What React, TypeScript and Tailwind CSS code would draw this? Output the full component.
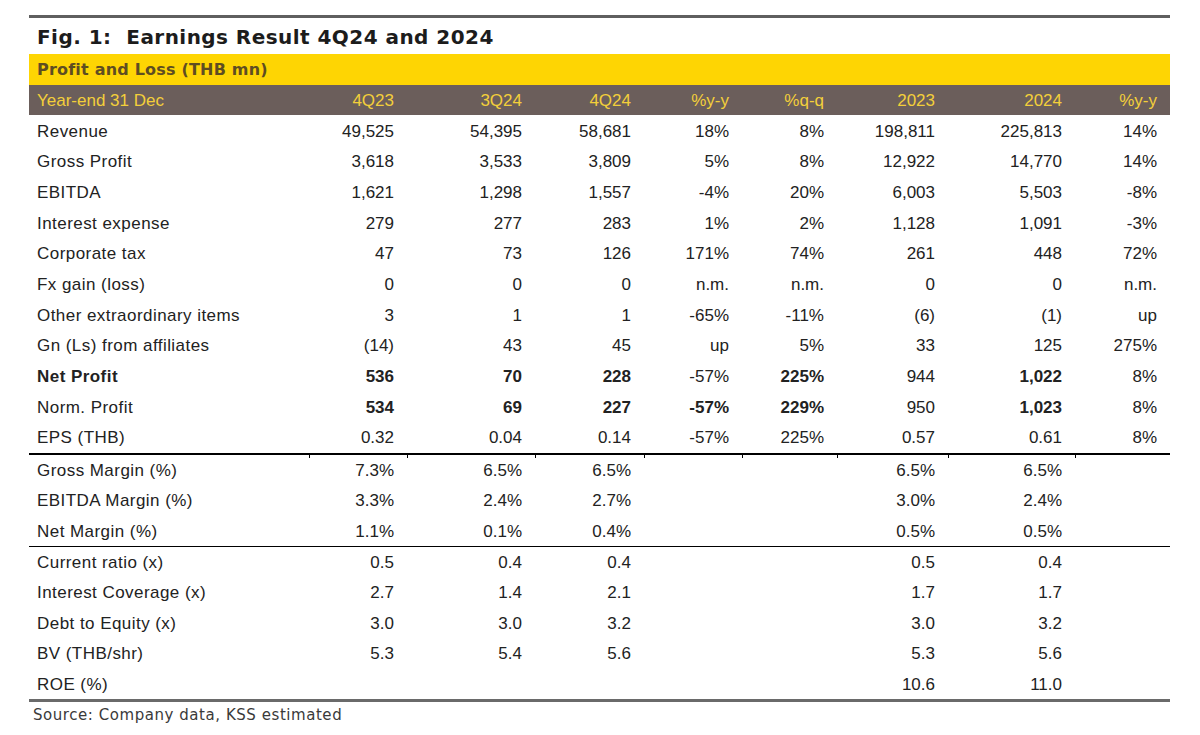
import React from "react";

type Cell = string | { v: string; b?: boolean };
type Row = { label: string; bold?: boolean; cells: Cell[] };

const cols = ["w-[280px]", "w-[98px]", "w-[128px]", "w-[109px]", "w-[98px]", "w-[95px]", "w-[111px]", "w-[127px]", "w-[95px]"];

const B = (v: string) => ({ v, b: true });

const block1: Row[] = [
  { label: "Revenue", cells: ["49,525", "54,395", "58,681", "18%", "8%", "198,811", "225,813", "14%"] },
  { label: "Gross Profit", cells: ["3,618", "3,533", "3,809", "5%", "8%", "12,922", "14,770", "14%"] },
  { label: "EBITDA", cells: ["1,621", "1,298", "1,557", "-4%", "20%", "6,003", "5,503", "-8%"] },
  { label: "Interest expense", cells: ["279", "277", "283", "1%", "2%", "1,128", "1,091", "-3%"] },
  { label: "Corporate tax", cells: ["47", "73", "126", "171%", "74%", "261", "448", "72%"] },
  { label: "Fx gain (loss)", cells: ["0", "0", "0", "n.m.", "n.m.", "0", "0", "n.m."] },
  { label: "Other extraordinary items", cells: ["3", "1", "1", "-65%", "-11%", "(6)", "(1)", "up"] },
  { label: "Gn (Ls) from affiliates", cells: ["(14)", "43", "45", "up", "5%", "33", "125", "275%"] },
  { label: "Net Profit", bold: true, cells: [B("536"), B("70"), B("228"), "-57%", B("225%"), "944", B("1,022"), "8%"] },
  { label: "Norm. Profit", cells: [B("534"), B("69"), B("227"), B("-57%"), B("229%"), "950", B("1,023"), "8%"] },
  { label: "EPS (THB)", cells: ["0.32", "0.04", "0.14", "-57%", "225%", "0.57", "0.61", "8%"] },
];

const block2: Row[] = [
  { label: "Gross Margin (%)", cells: ["7.3%", "6.5%", "6.5%", "", "", "6.5%", "6.5%", ""] },
  { label: "EBITDA Margin (%)", cells: ["3.3%", "2.4%", "2.7%", "", "", "3.0%", "2.4%", ""] },
  { label: "Net Margin (%)", cells: ["1.1%", "0.1%", "0.4%", "", "", "0.5%", "0.5%", ""] },
];

const block3: Row[] = [
  { label: "Current ratio (x)", cells: ["0.5", "0.4", "0.4", "", "", "0.5", "0.4", ""] },
  { label: "Interest Coverage (x)", cells: ["2.7", "1.4", "2.1", "", "", "1.7", "1.7", ""] },
  { label: "Debt to Equity (x)", cells: ["3.0", "3.0", "3.2", "", "", "3.0", "3.2", ""] },
  { label: "BV (THB/shr)", cells: ["5.3", "5.4", "5.6", "", "", "5.3", "5.6", ""] },
  { label: "ROE (%)", cells: ["", "", "", "", "", "10.6", "11.0", ""] },
];

function DataRow({ row, h }: { row: Row; h: string }) {
  return (
    <div className={`flex items-center pt-[2px] ${h}`}>
      <div className={`${cols[0]} pl-[8px] tracking-[0.45px] ${row.bold ? "font-bold" : ""}`}>{row.label}</div>
      {row.cells.map((c, i) => {
        const v = typeof c === "string" ? c : c.v;
        const b = typeof c === "string" ? false : c.b;
        return (
          <div key={i} className={`${cols[i + 1]} pr-[13px] text-right ${b ? "font-bold" : ""}`}>
            {v}
          </div>
        );
      })}
    </div>
  );
}

const headers = ["4Q23", "3Q24", "4Q24", "%y-y", "%q-q", "2023", "2024", "%y-y"];

export default function App() {
  return (
    <div className="w-[1200px] h-[735px] bg-white pt-[15px] pl-[29px]">
      <div className="w-[1141px]">
        <div className="h-[3px] bg-[#5f5f5f]" />
        <div className="h-[36px] flex items-center pl-[8px] pt-[2px] text-[20px] font-bold tracking-[0.45px] text-[#1c1c1c] [font-family:'DejaVu_Sans',sans-serif]">
          Fig. 1:&nbsp; Earnings Result 4Q24 and 2024
        </div>
        <div className="h-[31px] bg-[#fed503] flex items-center pl-[8px] pt-[1px] text-[16px] font-bold tracking-[0.2px] text-[#5e4d22] [font-family:'DejaVu_Sans',sans-serif]">
          Profit and Loss (THB mn)
        </div>
        <div className="h-[30px] bg-[#6b5e5b] flex items-center pt-[1px] text-[17px] text-[#f3cf3a] [font-family:'Liberation_Sans',Arial,sans-serif]">
          <div className={`${cols[0]} pl-[8px]`}>Year-end 31 Dec</div>
          {headers.map((h, i) => (
            <div key={i} className={`${cols[i + 1]} pr-[13px] text-right`}>
              {h}
            </div>
          ))}
        </div>
        <div className="text-[17px] text-[#222] [font-family:'Liberation_Sans',Arial,sans-serif]">
          {block1.map((r, i) => (
            <DataRow key={i} row={r} h="h-[30.7px]" />
          ))}
          <div className="h-[2px] bg-black" />
          <div className="h-0 flex">
            {cols.map((c, i) => (
              <div key={i} className={`${c} h-[3px] ${i > 0 ? "border-l border-black" : ""}`} />
            ))}
          </div>
          {block2.map((r, i) => (
            <DataRow key={i} row={r} h="h-[30.33px]" />
          ))}
          <div className="h-[1px] bg-black" />
          {block3.map((r, i) => (
            <DataRow key={i} row={r} h="h-[30.4px]" />
          ))}
        </div>
        <div className="h-[3px] bg-[#6a6a6a]" />
        <div className="pl-[4px] pt-[2px] text-[15px] tracking-[0.55px] text-[#3a3a3a] [font-family:'DejaVu_Sans',sans-serif]">
          Source: Company data, KSS estimated
        </div>
      </div>
    </div>
  );
}
